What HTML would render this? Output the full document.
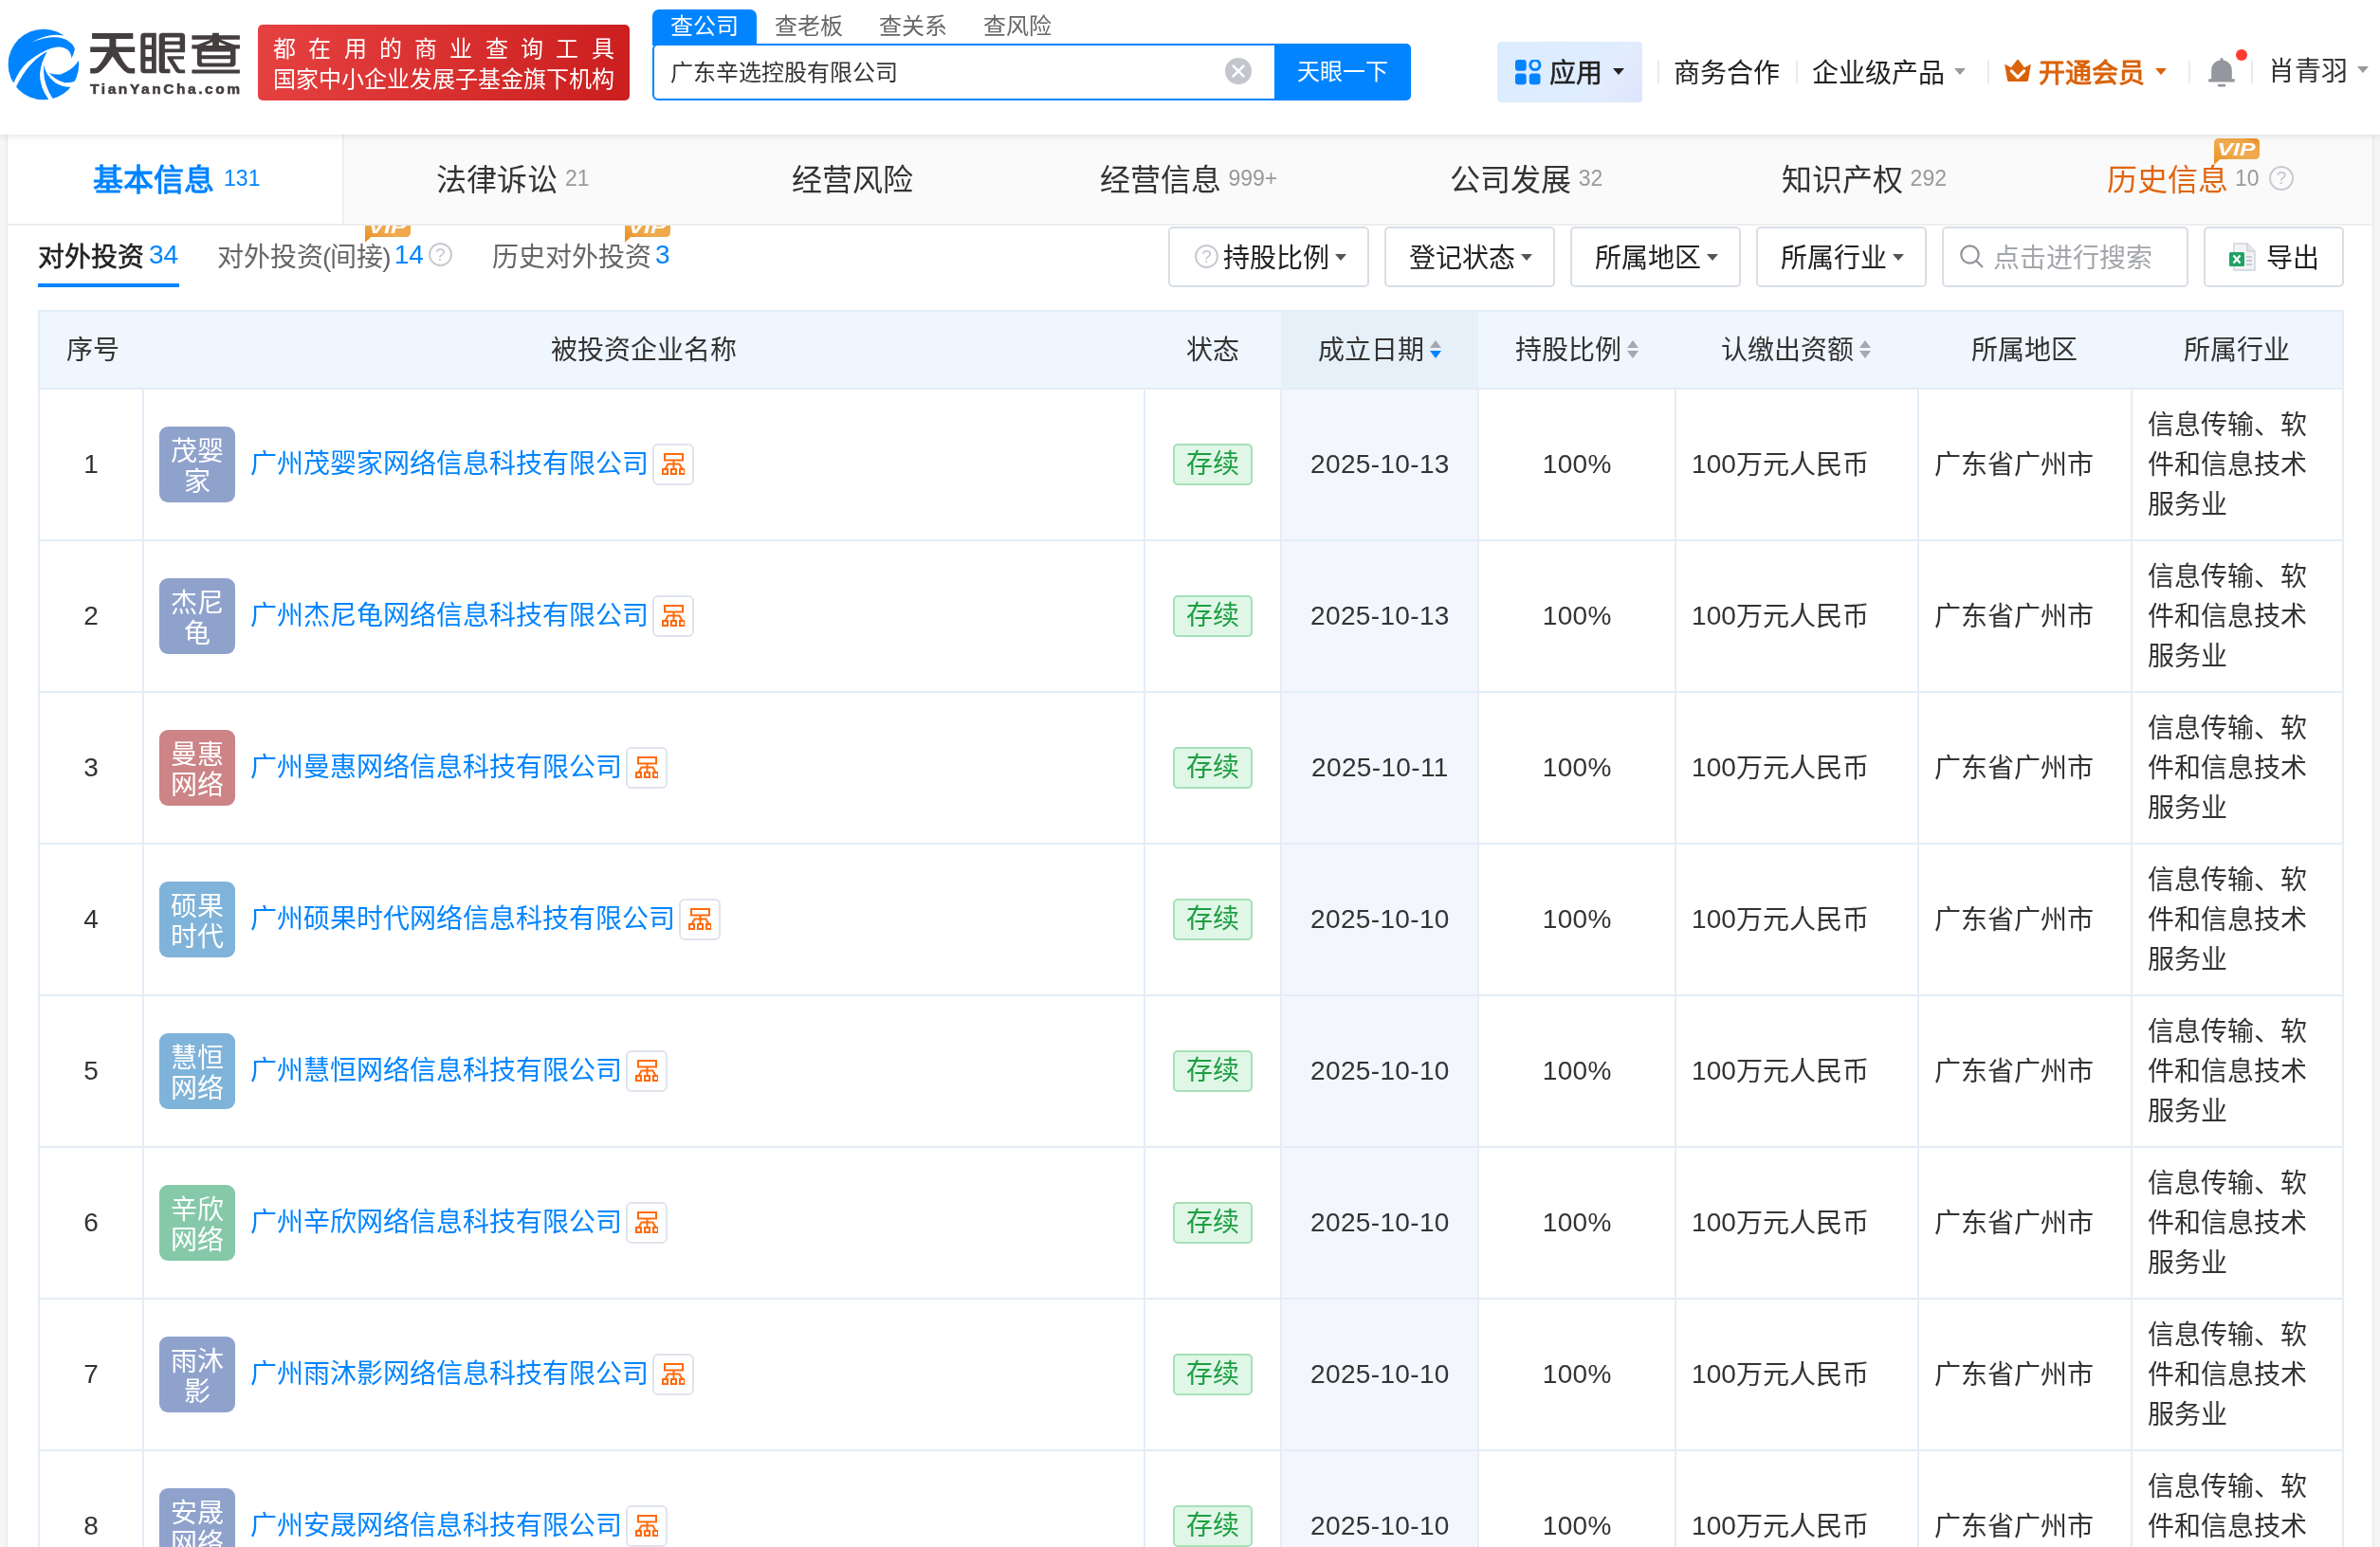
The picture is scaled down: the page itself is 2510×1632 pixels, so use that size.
<!DOCTYPE html>
<html lang="zh-CN"><head><meta charset="utf-8"><title>天眼查</title>
<style>
*{box-sizing:border-box;margin:0;padding:0}
html,body{width:2510px;height:1632px;overflow:hidden}
body{font-family:"Liberation Sans",sans-serif;background:#f5f5f5;color:#333;position:relative;font-size:28px}
i,b{font-style:normal;font-weight:normal}
.abs{position:absolute}
#hdr{position:absolute;left:0;top:0;width:2510px;height:142px;background:#fff;box-shadow:0 1px 8px rgba(0,0,0,.12);z-index:5;will-change:transform}
#main{position:absolute;left:8px;top:142px;width:2494px;height:1490px;background:#fff;will-change:transform;box-shadow:0 0 3px rgba(0,0,0,.13)}
/* logo */
#logo{position:absolute;left:0;top:20px}
#lgtxt{position:absolute;left:88px;top:26px}
#lgen{position:absolute;left:95px;top:84px;font-size:15.5px;line-height:20px;font-weight:bold;color:#443e3e;letter-spacing:2.58px;white-space:nowrap;-webkit-text-stroke:.55px #443e3e}
#ban{position:absolute;left:272px;top:26px;width:392px;height:80px;border-radius:5px;background:linear-gradient(100deg,#e64141 0%,#d93030 50%,#cb1e1e 100%);color:#fff;font-size:24px;line-height:32px;padding:9.5px 0 0 16px;white-space:nowrap}
#ban .l1{letter-spacing:13.3px}
/* search */
.stab{position:absolute;top:10px;width:110px;height:38px;line-height:36px;text-align:center;font-size:24px;color:#666}
.stab.on{background:#0084ff;color:#fff;border-radius:7px 7px 0 0}
#sbox{position:absolute;left:688px;top:46px;width:660px;height:60px;border:2px solid #0084ff;border-radius:6px 0 0 6px;background:#fff;font-size:24px;line-height:58px;padding-left:16.5px;color:#333}
#sbtn{position:absolute;left:1344px;top:46px;width:144px;height:60px;background:#0084ff;color:#fff;border-radius:0 5px 5px 0;font-size:24px;line-height:60px;text-align:center}
#sclr{position:absolute;left:1292px;top:60.6px;width:28px;height:28px}
/* right nav */
#app{position:absolute;left:1579px;top:44px;width:153px;height:64px;border-radius:4px;background:linear-gradient(125deg,#dcecff 0%,#deedff 55%,#e3ecfd 75%,#dbe4fb 100%)}
.hn{position:absolute;top:58px;height:40px;line-height:40px;font-size:28px;color:#222;white-space:nowrap}
.sep{position:absolute;top:64px;width:2px;height:24px;background:#e6eaf0}
.car{position:absolute;width:0;height:0;border-left:6.5px solid transparent;border-right:6.5px solid transparent;border-top:7px solid #999}
/* nav tabs */
#nav{position:absolute;left:0;top:0;width:2494px;height:96px;background:#fafafa;border-bottom:2px solid #ededed}
.nt{position:absolute;top:0;height:94px;width:356.3px;text-align:center;line-height:96px;font-size:32px;color:#333;white-space:nowrap}
.nt em{font-style:normal;font-size:23px;color:#999;margin-left:7.5px;font-weight:normal;position:relative;top:-5.5px}
.nt.on{background:#fff;color:#0084ff;font-weight:bold;border-right:2px solid #efefef;width:355px;padding-left:3px}
.nt.on em{color:#0084ff;margin-left:10.5px} .nt.c{padding-right:3px}
.q{display:inline-block;border:2px solid #c6cad1;border-radius:50%;color:#c0c4cc;text-align:center;font-weight:normal}
/* sub tabs */
.sub{position:absolute;top:108.5px;height:42px;line-height:42px;font-size:28px;color:#666;white-space:nowrap}
.sub em{font-style:normal;color:#0084ff;margin-left:5px;position:relative;top:-2.5px}
.sub.on{color:#222;-webkit-text-stroke:.55px #222} .sub.on em{-webkit-text-stroke:0} .pr{margin:0 -1px}
#ul{position:absolute;left:32px;top:157px;width:149px;height:4px;background:#0084ff}
.vip{position:absolute;z-index:1}
.fb{position:absolute;top:97px;height:64px;border:2px solid #d9dee6;border-radius:5px;background:#fff;font-size:28px;line-height:60px;color:#222;white-space:nowrap}
.fb .car{border-top-color:#555;top:27px} .ft{position:absolute;top:2px}
/* table */
table{position:absolute;left:32px;top:185px;width:2432px;border-collapse:collapse;table-layout:fixed}
th,td{border:2px solid #e3edf7;font-weight:normal;vertical-align:middle;font-size:28px}
th{background:#eff6fd;height:82px;line-height:42px;padding-top:1px;color:#333;text-align:center;border-left-color:transparent;border-right-color:transparent}
th:first-child{border-left-color:#e3edf7;padding-left:3px} th:last-child{border-right-color:#e3edf7}
th.hl{background:#e6f0f8}
td{height:160px;line-height:42px;background:#fff;color:#333}
td.c1,td.c3,td.c4,td.c5{text-align:center}
td.c4{background:#f3f7fd;letter-spacing:.35px} td.c5{letter-spacing:.3px}
td.c6,td.c7,td.c8{padding:1px 14px 0 16px} .n{position:relative;top:-.5px}
.co{display:flex;align-items:center;padding-left:16px}
.lg{width:80px;height:80px;border-radius:9px;color:#fff;font-size:28px;line-height:32px;text-align:center;padding-top:11px;flex:none}
.nm{color:#0084ff;margin-left:16px}
.ob{width:44px;height:44px;border:2px solid #dfe4ec;border-radius:6px;margin-left:4px;position:relative;flex:none;background:#fff}
.org{position:absolute;left:8px;top:8px}
.tag{position:relative;left:0;display:inline-block;width:84px;height:44px;line-height:40px;border:2px solid #a6e0b8;background:#e0f7e7;border-radius:5px;color:#1d9e42;font-size:28px}
.st{display:inline-block;width:13px;height:20px;position:relative;margin-left:6px;vertical-align:0px}
.st b{position:absolute;left:0;width:0;height:0;border-left:6.5px solid transparent;border-right:6.5px solid transparent}
.st .u{top:0;border-bottom:8px solid #a3a8b1}
.st .d{top:11.5px;border-top:8px solid #a3a8b1}
.st .d.on{border-top-color:#0084ff}
</style></head><body>
<div id="hdr">
 <svg id="logo" width="100" height="100" viewBox="0 0 100 100">
  <defs><clipPath id="cc"><circle cx="45.9" cy="48" r="37.3"/></clipPath></defs>
  <g clip-path="url(#cc)" fill="#0084ff">
   <path d="M0 0H66.9V17.5Q52 14 33.3 24.6Q60 14.5 73 23.9Q80 29 78.5 33.6Q77.5 38 75.3 41.4Q75 30 61.4 29.4Q49 30 29.1 45.2Q20 54 14.5 67.2L0 80z"/>
   <path d="M17.1 71.4Q30 45 49.8 34.3Q43 46 42 58.2Q42 72 51.1 84.7L40 100H0z"/>
   <path d="M46.5 48.2Q47 58 58.2 67.2Q66 72 74.3 71.8L70 100H55.6V84Q44 66 46.5 48.2z"/>
   <path d="M82.7 44Q78 53 64.6 58.2Q58 59 51.7 56.9Q58 64 67.9 67.2Q73 67.5 78.5 65.9L100 60V44z"/>
  </g>
 </svg>
 <svg id="lgtxt" width="174" height="60" viewBox="0 0 174 60" fill="#443e3e" fill-rule="evenodd">
  <path d="M9.1 9.1H52.3V15H34.4V23.5H54.2V29.1H36.8Q42 40.5 47 45Q48.6 46.1 50.6 46.1H54.2V51.5H49.5Q45.5 51.5 42.6 48.6Q36.5 42.4 30.8 33.4Q25 42.4 19 48.6Q16 51.5 12 51.5H7.2V46.1H10.8Q12.8 46.1 14.4 45Q19.5 40.5 24.8 29.1H7.2V23.5H27.4V15H9.1z"/>
  <path d="M64 8.8H76.8V51.2H64Q60.3 51.2 60.3 47.5V12.5Q60.3 8.8 64 8.8zM65.4 13.5V21.6H72V13.5zM65.4 26V34H72V26zM65.4 38.4V46.8H72V38.4z"/>
  <path d="M83.4 8.8H103.4Q107.1 8.8 107.1 12.5V29.2H85.9V46.8H91.4V51.2H83.4Q79.7 51.2 79.7 47.5V12.5Q79.7 8.8 83.4 8.8zM85.9 13.5V17.5H101.6V13.5zM85.9 21.2V25.6H101.6V21.2z"/>
  <path d="M88.5 33.3H106V36.6H94.4L100.6 46.2Q101.4 47.5 102.8 47.5H107.1V51.2H101Q98.6 51.2 97.4 49.4L88.5 35.6z"/>
  <path d="M136.1 8.8H142.9V11.3H164.9V15.7H144.5L159 21.2H164.9V25.6H160.5V40.6Q160.5 44.6 156.5 44.6H123.9Q119.9 44.6 119.9 40.6V25.6H114.4V21.2H120.3L134.5 15.7H114.4V11.3H136.1zM136.1 18.3L128.3 21.9H136.1zM142.9 18.3V21.9H150.8zM124.7 28.5V32.2H155V28.5zM124.7 36.2V39Q124.7 40.6 126.3 40.6H153.4Q155 40.6 155 39V36.2z"/>
  <path d="M114.4 47.5H164.9V51.5H114.4z"/>
 </svg>
 <div id="lgen">TianYanCha.com</div>
 <div id="ban"><div class="l1">都在用的商业查询工具</div><div>国家中小企业发展子基金旗下机构</div></div>

 <div class="stab on" style="left:688px">查公司</div>
 <div class="stab" style="left:798px">查老板</div>
 <div class="stab" style="left:908px">查关系</div>
 <div class="stab" style="left:1018px">查风险</div>
 <div id="sbox">广东辛选控股有限公司</div>
 <svg id="sclr" viewBox="0 0 28 28"><circle cx="14" cy="14" r="14" fill="#c3c6cc"/><path d="M8.6 8.6l10.8 10.8M19.4 8.6L8.6 19.4" stroke="#fff" stroke-width="2.6" stroke-linecap="round"/></svg>
 <div id="sbtn">天眼一下</div>

 <div id="app"></div>
 <svg class="abs" style="left:1597.6px;top:62.9px" width="28" height="27" viewBox="0 0 28 27"><rect x="0" y="0" width="11.7" height="11.7" rx="3" fill="#0084ff"/><rect x="0" y="14.6" width="11.7" height="11.7" rx="3" fill="#0084ff"/><rect x="14.8" y="14.6" width="11.7" height="11.7" rx="3" fill="#0084ff"/><circle cx="20.9" cy="5.55" r="5.05" fill="none" stroke="#0084ff" stroke-width="3"/></svg>
 <div class="hn" style="left:1634.4px;-webkit-text-stroke:.5px #222">应用</div>
 <div class="car" style="left:1701px;top:72px;border-top-color:#222"></div>
 <div class="sep" style="left:1748px"></div>
 <div class="hn" style="left:1765px">商务合作</div>
 <div class="sep" style="left:1894px"></div>
 <div class="hn" style="left:1911px">企业级产品</div>
 <div class="car" style="left:2061px;top:72px"></div>
 <div class="sep" style="left:2096px"></div>
 <svg class="abs" style="left:2113px;top:62px" width="30" height="24" viewBox="0 0 30 24"><path d="M1.3 6.4Q1.1 5.6 1.9 5.9L8 9.3 14.4 1.1Q15 .3 15.6 1.1L22 9.3 28.1 5.9Q28.9 5.6 28.7 6.4L26 22.6Q25.8 24 24.6 24H5.4Q4.2 24 4 22.6z" fill="#d9620a"/><path d="M8.4 12.9l6.6 6.8 6.6-6.8" fill="none" stroke="#fff" stroke-width="3.2" stroke-linecap="round" stroke-linejoin="round"/></svg>
 <div class="hn" style="left:2150.2px;color:#d9620a;font-weight:bold">开通会员</div>
 <div class="car" style="left:2273px;top:72px;border-top-color:#d9620a"></div>
 <div class="sep" style="left:2308px"></div>
 <svg class="abs" style="left:2328px;top:58px" width="30" height="36" viewBox="0 0 30 36"><path d="M13.4 4.5a1.6 1.6 0 0 1 3.2 0v1.1c5.6 1 9.2 5.2 9.2 10.4v9.3h3v3.2H1.2v-3.2h3V16c0-5.2 3.6-9.4 9.2-10.4z" fill="#94979d"/><rect x="10.8" y="30.8" width="8.4" height="2.6" rx="1" fill="#94979d"/></svg>
 <div class="abs" style="left:2358px;top:52px;width:12px;height:12px;border-radius:50%;background:#ff3b30"></div>
 <div class="sep" style="left:2374px"></div>
 <div class="hn" style="left:2391.5px;top:56px;color:#333">肖青羽</div>
 <div class="car" style="left:2485.5px;top:70px"></div>
</div>

<div id="main">
 <div id="nav">
  <div class="nt on" style="left:0">基本信息<em>131</em></div>
  <div class="nt c" style="left:356.3px">法律诉讼<em>21</em></div>
  <div class="nt" style="left:712.6px">经营风险</div>
  <div class="nt c" style="left:1068.9px">经营信息<em>999+</em></div>
  <div class="nt c" style="left:1425.1px">公司发展<em>32</em></div>
  <div class="nt c" style="left:1781.4px">知识产权<em>292</em></div>
  <div class="nt" style="left:2137.7px;color:#e0650f;padding-right:7px">历史信息<em>10</em><span class="q" style="width:26px;height:26px;line-height:22px;font-size:19px;margin-left:10.5px;vertical-align:7px">?</span></div>
 </div>
 <svg class="vip" style="left:2327px;top:4px" viewBox="0 0 48 28" width="48" height="28"><defs><linearGradient id="vg" x1="0" y1="1" x2="1" y2="0"><stop offset="0" stop-color="#e88c1c"/><stop offset=".45" stop-color="#f0ab50"/><stop offset=".8" stop-color="#efa646"/><stop offset="1" stop-color="#e58a1c"/></linearGradient></defs><path d="M4.5 0h39a4.5 4.5 0 0 1 4.5 4.5v13a4.5 4.5 0 0 1-4.5 4.5H6.4L0 27.8V4.5a4.5 4.5 0 0 1 4.5-4.5z" fill="url(#vg)"/><text x="3.5" y="17.6" font-family="Liberation Sans, sans-serif" font-size="19" font-weight="bold" font-style="italic" fill="#fff" textLength="40" lengthAdjust="spacingAndGlyphs">VIP</text></svg>
 <div class="sub on" style="left:32px">对外投资<em>34</em></div>
 <div id="ul"></div>
 <div class="sub" style="left:221px">对外投资<span class="pr">(</span>间接<span class="pr">)</span><em style="margin-left:4px">14</em><span class="q" style="width:25px;height:25px;line-height:21px;font-size:19px;margin-left:5px;position:relative;top:-5.5px">?</span></div>
 <div class="sub" style="left:511px">历史对外投资<em style="margin-left:4px">3</em></div>
 <div class="abs" style="left:377px;top:96px;width:50px;height:20px;overflow:hidden"><svg class="vip" style="left:0;top:-10.5px" viewBox="0 0 48 28" width="48" height="28"><defs><linearGradient id="vg2" x1="0" y1="1" x2="1" y2="0"><stop offset="0" stop-color="#e88c1c"/><stop offset=".45" stop-color="#f0ab50"/><stop offset=".8" stop-color="#efa646"/><stop offset="1" stop-color="#e58a1c"/></linearGradient></defs><path d="M4.5 0h39a4.5 4.5 0 0 1 4.5 4.5v13a4.5 4.5 0 0 1-4.5 4.5H6.4L0 27.8V4.5a4.5 4.5 0 0 1 4.5-4.5z" fill="url(#vg2)"/><text x="3.5" y="17.6" font-family="Liberation Sans, sans-serif" font-size="19" font-weight="bold" font-style="italic" fill="#fff" textLength="40" lengthAdjust="spacingAndGlyphs">VIP</text></svg></div>
 <div class="abs" style="left:651px;top:96px;width:50px;height:20px;overflow:hidden"><svg class="vip" style="left:0;top:-10.5px" viewBox="0 0 48 28" width="48" height="28"><defs><linearGradient id="vg3" x1="0" y1="1" x2="1" y2="0"><stop offset="0" stop-color="#e88c1c"/><stop offset=".45" stop-color="#f0ab50"/><stop offset=".8" stop-color="#efa646"/><stop offset="1" stop-color="#e58a1c"/></linearGradient></defs><path d="M4.5 0h39a4.5 4.5 0 0 1 4.5 4.5v13a4.5 4.5 0 0 1-4.5 4.5H6.4L0 27.8V4.5a4.5 4.5 0 0 1 4.5-4.5z" fill="url(#vg3)"/><text x="3.5" y="17.6" font-family="Liberation Sans, sans-serif" font-size="19" font-weight="bold" font-style="italic" fill="#fff" textLength="40" lengthAdjust="spacingAndGlyphs">VIP</text></svg></div>

 <div class="fb" style="left:1224px;width:212px"><span class="q" style="position:absolute;left:26px;top:17px;width:25px;height:25px;line-height:21px;font-size:19px">?</span><span class="ft" style="left:56px">持股比例</span><i class="car" style="left:174px"></i></div>
 <div class="fb" style="left:1452px;width:180px"><span class="ft" style="left:24px">登记状态</span><i class="car" style="left:142px"></i></div>
 <div class="fb" style="left:1648px;width:180px"><span class="ft" style="left:24px">所属地区</span><i class="car" style="left:142px"></i></div>
 <div class="fb" style="left:1844px;width:180px"><span class="ft" style="left:24px">所属行业</span><i class="car" style="left:142px"></i></div>
 <div class="fb" style="left:2040px;width:260px;color:#a3a6ab"><svg class="abs" style="left:17px;top:16.5px" width="26" height="26" viewBox="0 0 26 26" fill="none" stroke="#8f939b" stroke-width="2.2"><circle cx="10.5" cy="10.5" r="9.2"/><path d="M17.3 17.3l6 6" stroke-linecap="round"/></svg><span class="ft" style="left:52px">点击进行搜索</span></div>
 <div class="fb" style="left:2316px;width:148px"><svg class="abs" style="left:24.5px;top:14.5px" width="28" height="30" viewBox="0 0 28 30"><path d="M5 1h14l8 8v20H5z" fill="#f2f3f5" stroke="#cfd3da" stroke-width="1.5"/><path d="M19 1v8h8" fill="#e3e6eb" stroke="#cfd3da" stroke-width="1.5"/><path d="M18 15h6M18 19h6M18 23h6" stroke="#b9bec6" stroke-width="1.4"/><rect x="0" y="10" width="16" height="15" rx="1.5" fill="#21a366"/><path d="M4.5 13.5l7 8M11.5 13.5l-7 8" stroke="#fff" stroke-width="2.2"/></svg><span class="ft" style="left:64px">导出</span></div>

 <table>
  <colgroup><col style="width:110px"><col style="width:1056px"><col style="width:144.4px"><col style="width:208px"><col style="width:207.7px"><col style="width:255.7px"><col style="width:225px"><col style="width:223.2px"></colgroup>
  <tr><th>序号</th><th>被投资企业名称</th><th>状态</th><th class="hl">成立日期<i class="st"><b class="u"></b><b class="d on"></b></i></th><th>持股比例<i class="st"><b class="u"></b><b class="d"></b></i></th><th>认缴出资额<i class="st"><b class="u"></b><b class="d"></b></i></th><th>所属地区</th><th>所属行业</th></tr>
  <tr><td class="c1">1</td><td class="c2"><div class="co"><span class="lg" style="background:#8fa2cc">茂婴<br>家</span><span class="nm">广州茂婴家网络信息科技有限公司</span><span class="ob"><svg class="org" viewBox="0 0 24 24" width="24" height="24"><g fill="none" stroke="#ff6a0d" stroke-width="2"><rect x="3" y="1" width="19" height="6.5"/><path d="M12.5 7.5V17M3.5 17l3-5.5h12l3 5.5"/><rect x="1" y="17" width="5" height="5"/><rect x="10" y="17" width="5" height="5"/><rect x="19" y="17" width="5" height="5"/></g></svg></span></div></td><td class="c3"><span class="tag">存续</span></td><td class="c4">2025-10-13</td><td class="c5">100%</td><td class="c6"><span class="n">100</span>万元人民币</td><td class="c7">广东省广州市</td><td class="c8">信息传输、软件和信息技术服务业</td></tr><tr><td class="c1">2</td><td class="c2"><div class="co"><span class="lg" style="background:#8fa2cc">杰尼<br>龟</span><span class="nm">广州杰尼龟网络信息科技有限公司</span><span class="ob"><svg class="org" viewBox="0 0 24 24" width="24" height="24"><g fill="none" stroke="#ff6a0d" stroke-width="2"><rect x="3" y="1" width="19" height="6.5"/><path d="M12.5 7.5V17M3.5 17l3-5.5h12l3 5.5"/><rect x="1" y="17" width="5" height="5"/><rect x="10" y="17" width="5" height="5"/><rect x="19" y="17" width="5" height="5"/></g></svg></span></div></td><td class="c3"><span class="tag">存续</span></td><td class="c4">2025-10-13</td><td class="c5">100%</td><td class="c6"><span class="n">100</span>万元人民币</td><td class="c7">广东省广州市</td><td class="c8">信息传输、软件和信息技术服务业</td></tr><tr><td class="c1">3</td><td class="c2"><div class="co"><span class="lg" style="background:#cc8487">曼惠<br>网络</span><span class="nm">广州曼惠网络信息科技有限公司</span><span class="ob"><svg class="org" viewBox="0 0 24 24" width="24" height="24"><g fill="none" stroke="#ff6a0d" stroke-width="2"><rect x="3" y="1" width="19" height="6.5"/><path d="M12.5 7.5V17M3.5 17l3-5.5h12l3 5.5"/><rect x="1" y="17" width="5" height="5"/><rect x="10" y="17" width="5" height="5"/><rect x="19" y="17" width="5" height="5"/></g></svg></span></div></td><td class="c3"><span class="tag">存续</span></td><td class="c4">2025-10-11</td><td class="c5">100%</td><td class="c6"><span class="n">100</span>万元人民币</td><td class="c7">广东省广州市</td><td class="c8">信息传输、软件和信息技术服务业</td></tr><tr><td class="c1">4</td><td class="c2"><div class="co"><span class="lg" style="background:#7fb3d9">硕果<br>时代</span><span class="nm">广州硕果时代网络信息科技有限公司</span><span class="ob"><svg class="org" viewBox="0 0 24 24" width="24" height="24"><g fill="none" stroke="#ff6a0d" stroke-width="2"><rect x="3" y="1" width="19" height="6.5"/><path d="M12.5 7.5V17M3.5 17l3-5.5h12l3 5.5"/><rect x="1" y="17" width="5" height="5"/><rect x="10" y="17" width="5" height="5"/><rect x="19" y="17" width="5" height="5"/></g></svg></span></div></td><td class="c3"><span class="tag">存续</span></td><td class="c4">2025-10-10</td><td class="c5">100%</td><td class="c6"><span class="n">100</span>万元人民币</td><td class="c7">广东省广州市</td><td class="c8">信息传输、软件和信息技术服务业</td></tr><tr><td class="c1">5</td><td class="c2"><div class="co"><span class="lg" style="background:#7fb3d9">慧恒<br>网络</span><span class="nm">广州慧恒网络信息科技有限公司</span><span class="ob"><svg class="org" viewBox="0 0 24 24" width="24" height="24"><g fill="none" stroke="#ff6a0d" stroke-width="2"><rect x="3" y="1" width="19" height="6.5"/><path d="M12.5 7.5V17M3.5 17l3-5.5h12l3 5.5"/><rect x="1" y="17" width="5" height="5"/><rect x="10" y="17" width="5" height="5"/><rect x="19" y="17" width="5" height="5"/></g></svg></span></div></td><td class="c3"><span class="tag">存续</span></td><td class="c4">2025-10-10</td><td class="c5">100%</td><td class="c6"><span class="n">100</span>万元人民币</td><td class="c7">广东省广州市</td><td class="c8">信息传输、软件和信息技术服务业</td></tr><tr><td class="c1">6</td><td class="c2"><div class="co"><span class="lg" style="background:#86c9a9">辛欣<br>网络</span><span class="nm">广州辛欣网络信息科技有限公司</span><span class="ob"><svg class="org" viewBox="0 0 24 24" width="24" height="24"><g fill="none" stroke="#ff6a0d" stroke-width="2"><rect x="3" y="1" width="19" height="6.5"/><path d="M12.5 7.5V17M3.5 17l3-5.5h12l3 5.5"/><rect x="1" y="17" width="5" height="5"/><rect x="10" y="17" width="5" height="5"/><rect x="19" y="17" width="5" height="5"/></g></svg></span></div></td><td class="c3"><span class="tag">存续</span></td><td class="c4">2025-10-10</td><td class="c5">100%</td><td class="c6"><span class="n">100</span>万元人民币</td><td class="c7">广东省广州市</td><td class="c8">信息传输、软件和信息技术服务业</td></tr><tr><td class="c1">7</td><td class="c2"><div class="co"><span class="lg" style="background:#8fa2cc">雨沐<br>影</span><span class="nm">广州雨沐影网络信息科技有限公司</span><span class="ob"><svg class="org" viewBox="0 0 24 24" width="24" height="24"><g fill="none" stroke="#ff6a0d" stroke-width="2"><rect x="3" y="1" width="19" height="6.5"/><path d="M12.5 7.5V17M3.5 17l3-5.5h12l3 5.5"/><rect x="1" y="17" width="5" height="5"/><rect x="10" y="17" width="5" height="5"/><rect x="19" y="17" width="5" height="5"/></g></svg></span></div></td><td class="c3"><span class="tag">存续</span></td><td class="c4">2025-10-10</td><td class="c5">100%</td><td class="c6"><span class="n">100</span>万元人民币</td><td class="c7">广东省广州市</td><td class="c8">信息传输、软件和信息技术服务业</td></tr><tr><td class="c1">8</td><td class="c2"><div class="co"><span class="lg" style="background:#8fa2cc">安晟<br>网络</span><span class="nm">广州安晟网络信息科技有限公司</span><span class="ob"><svg class="org" viewBox="0 0 24 24" width="24" height="24"><g fill="none" stroke="#ff6a0d" stroke-width="2"><rect x="3" y="1" width="19" height="6.5"/><path d="M12.5 7.5V17M3.5 17l3-5.5h12l3 5.5"/><rect x="1" y="17" width="5" height="5"/><rect x="10" y="17" width="5" height="5"/><rect x="19" y="17" width="5" height="5"/></g></svg></span></div></td><td class="c3"><span class="tag">存续</span></td><td class="c4">2025-10-10</td><td class="c5">100%</td><td class="c6"><span class="n">100</span>万元人民币</td><td class="c7">广东省广州市</td><td class="c8">信息传输、软件和信息技术服务业</td></tr>
 </table>
</div>
</body></html>
